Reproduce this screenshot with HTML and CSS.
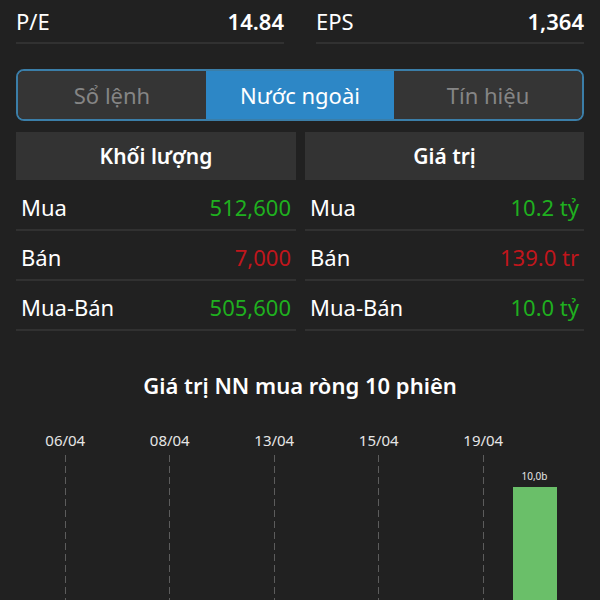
FILE: index.html
```html
<!DOCTYPE html>
<html lang="vi">
<head>
  <meta charset="UTF-8">
  <meta name="viewport" content="width=device-width, initial-scale=1.0">
  <title>Nước ngoài</title>
  <link rel="stylesheet" href="styles.css">
</head>
<body>
  <div class="chi-so">
    <div class="o-chi-so"><span>P/E</span><b>14.84</b></div>
    <div class="o-chi-so"><span>EPS</span><b>1,364</b></div>
  </div>

  <div class="tabs">
    <div class="tab">Sổ lệnh</div>
    <div class="tab active">Nước ngoài</div>
    <div class="tab">Tín hiệu</div>
  </div>

  <div class="bang">
    <div class="cot">
      <div class="tieu-de">Khối lượng</div>
      <div class="dong"><span>Mua</span><span class="tang">512,600</span></div>
      <div class="dong"><span>Bán</span><span class="giam">7,000</span></div>
      <div class="dong"><span>Mua-Bán</span><span class="tang">505,600</span></div>
    </div>
    <div class="cot">
      <div class="tieu-de">Giá trị</div>
      <div class="dong"><span>Mua</span><span class="tang">10.2 tỷ</span></div>
      <div class="dong"><span>Bán</span><span class="giam">139.0 tr</span></div>
      <div class="dong"><span>Mua-Bán</span><span class="tang">10.0 tỷ</span></div>
    </div>
  </div>

  <h2 class="tieu-de-bieu-do">Giá trị NN mua ròng 10 phiên</h2>

  <div class="bieu-do">
    <div class="ngay"><span>06/04</span><i></i></div>
    <div class="ngay"><span>08/04</span><i></i></div>
    <div class="ngay"><span>13/04</span><i></i></div>
    <div class="ngay"><span>15/04</span><i></i></div>
    <div class="ngay"><span>19/04</span><i></i></div>
    <div class="cot-gia-tri">
      <span>10,0b</span>
      <div class="thanh"></div>
    </div>
  </div>
</body>
</html>
```

FILE: styles.css
```css
body {
  background: #212121;
  color: #ffffff;
  font-family: "Noto Sans", "Open Sans", sans-serif;
  margin: 0;
  padding: 0 16px;
  height: 600px;
  overflow: hidden;
}

.chi-so {
  display: grid;
  grid-template-columns: 1fr 1fr;
  gap: 32px;
}

.o-chi-so {
  display: flex;
  justify-content: space-between;
  align-items: center;
  height: 42px;
  border-bottom: 2px solid #313131;
  font-size: 22px;
}

.o-chi-so b {
  font-weight: 600;
}

.tabs {
  display: flex;
  margin-top: 25px;
  height: 48px;
  border: 2px solid #3b7ea8;
  border-radius: 8px;
  overflow: hidden;
}

.tab {
  flex: 1;
  display: flex;
  justify-content: center;
  align-items: center;
  background: #353535;
  color: #858585;
  font-size: 22px;
}

.tab.active {
  background: #2d87c6;
  color: #ffffff;
}

.bang {
  display: grid;
  grid-template-columns: 280px 1fr;
  gap: 9px;
  margin-top: 11px;
}

.tieu-de {
  background: #333333;
  height: 48px;
  display: flex;
  justify-content: center;
  align-items: center;
  font-size: 21px;
  font-weight: 600;
}

.dong {
  box-sizing: border-box;
  display: flex;
  justify-content: space-between;
  align-items: center;
  height: 51px;
  padding: 4px 5px 0;
  border-bottom: 2px solid #313131;
  font-size: 22px;
}

.dong + .dong {
  height: 50px;
}

.tang {
  color: #1fb01f;
}

.giam {
  color: #c0161c;
}

.tieu-de-bieu-do {
  margin: 39px 0 0;
  text-align: center;
  font-size: 22px;
  font-weight: 600;
}

.bieu-do {
  display: flex;
  align-items: stretch;
  margin-top: 30px;
  margin-left: -3px;
  height: 200px;
}

.ngay {
  width: 104.5px;
  display: flex;
  flex-direction: column;
  align-items: center;
  font-size: 15px;
  color: #e6e6e6;
}

.ngay i {
  flex: 1;
  width: 1px;
  margin-top: 5px;
  background: repeating-linear-gradient(to bottom, #5c5c5c 0 7px, transparent 7px 11px);
}

.cot-gia-tri {
  width: 44px;
  margin-left: -23px;
  display: flex;
  flex-direction: column;
  align-items: center;
  padding-top: 39px;
  font-size: 10px;
  color: #e6e6e6;
}

.thanh {
  flex: 1;
  width: 100%;
  margin-top: 4px;
  background: #6abf69;
}
```
